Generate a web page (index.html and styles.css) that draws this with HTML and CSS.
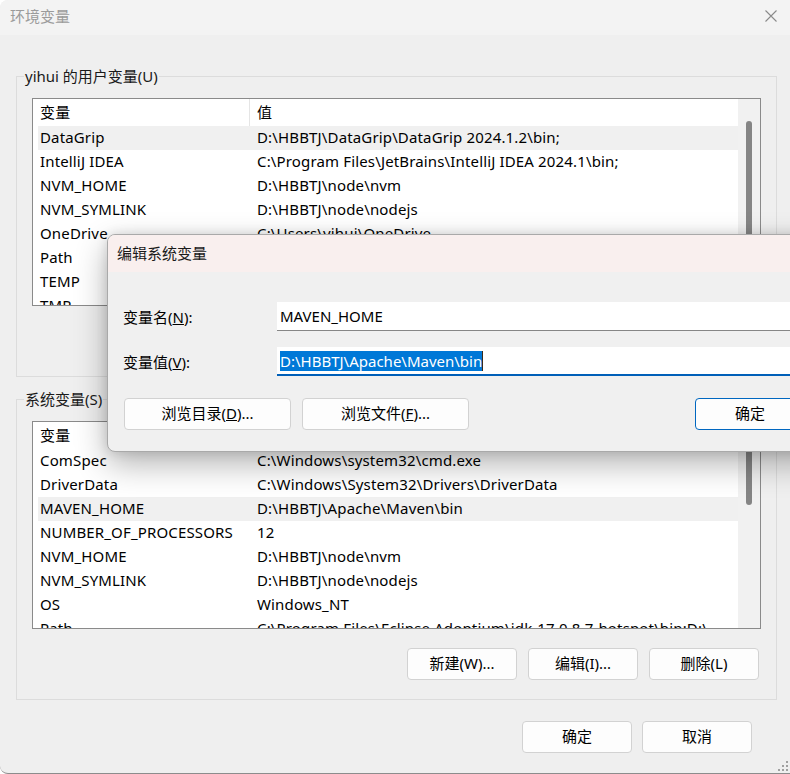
FILE: index.html
```html
<!DOCTYPE html>
<html lang="zh-CN">
<head>
  <meta charset="UTF-8">
  <title>环境变量</title>
  <link rel="stylesheet" href="styles.css">
</head>
<body>

<div class="window">
  <div class="titlebar">
    <span class="title">环境变量</span>
    <svg class="close" viewBox="0 0 12 12"><path d="M0.5 0.5L11.5 11.5M11.5 0.5L0.5 11.5" stroke="#8a8a8a" stroke-width="1.1" fill="none"/></svg>
  </div>

  <div class="content">
    <fieldset class="group">
      <legend>yihui 的用户变量(U)</legend>
      <div class="list">
        <div class="rows">
          <div class="row head"><span>变量</span><span>值</span></div>
          <div class="row sel"><span>DataGrip</span><span>D:\HBBTJ\DataGrip\DataGrip 2024.1.2\bin;</span></div>
          <div class="row"><span>IntelliJ IDEA</span><span>C:\Program Files\JetBrains\IntelliJ IDEA 2024.1\bin;</span></div>
          <div class="row"><span>NVM_HOME</span><span>D:\HBBTJ\node\nvm</span></div>
          <div class="row"><span>NVM_SYMLINK</span><span>D:\HBBTJ\node\nodejs</span></div>
          <div class="row"><span>OneDrive</span><span>C:\Users\yihui\OneDrive</span></div>
          <div class="row"><span>Path</span><span>C:\Users\yihui\AppData\Local\Microsoft\WindowsApps;</span></div>
          <div class="row"><span>TEMP</span><span>C:\Users\yihui\AppData\Local\Temp</span></div>
          <div class="row"><span>TMP</span><span>C:\Users\yihui\AppData\Local\Temp</span></div>
        </div>
        <div class="scrollbar"><div class="thumb user-thumb"></div></div>
      </div>
      <div class="actions">
        <button class="btn">新建(N)...</button>
        <button class="btn">编辑(E)...</button>
        <button class="btn">删除(D)</button>
      </div>
    </fieldset>

    <fieldset class="group">
      <legend>系统变量(S)</legend>
      <div class="list">
        <div class="rows">
          <div class="row head"><span>变量</span><span>值</span></div>
          <div class="row"><span>ComSpec</span><span>C:\Windows\system32\cmd.exe</span></div>
          <div class="row"><span>DriverData</span><span>C:\Windows\System32\Drivers\DriverData</span></div>
          <div class="row sel"><span>MAVEN_HOME</span><span>D:\HBBTJ\Apache\Maven\bin</span></div>
          <div class="row"><span>NUMBER_OF_PROCESSORS</span><span>12</span></div>
          <div class="row"><span>NVM_HOME</span><span>D:\HBBTJ\node\nvm</span></div>
          <div class="row"><span>NVM_SYMLINK</span><span>D:\HBBTJ\node\nodejs</span></div>
          <div class="row"><span>OS</span><span>Windows_NT</span></div>
          <div class="row"><span>Path</span><span>C:\Program Files\Eclipse Adoptium\jdk-17.0.8.7-hotspot\bin;D:\</span></div>
        </div>
        <div class="scrollbar"><div class="thumb sys-thumb"></div></div>
      </div>
      <div class="actions">
        <button class="btn">新建(W)...</button>
        <button class="btn">编辑(I)...</button>
        <button class="btn">删除(L)</button>
      </div>
    </fieldset>

    <div class="footer">
      <button class="btn">确定</button>
      <button class="btn">取消</button>
    </div>
  </div>

  <div class="dialog">
    <div class="dlg-title">编辑系统变量</div>
    <div class="dlg-body">
      <div class="form-row">
        <span>变量名(<u>N</u>):</span>
        <div class="field">MAVEN_HOME</div>
      </div>
      <div class="form-row">
        <span>变量值(<u>V</u>):</span>
        <div class="field active"><span class="selected">D:\HBBTJ\Apache\Maven\bin</span><span class="caret"></span></div>
      </div>
      <div class="dlg-actions">
        <button class="btn wide">浏览目录(<u>D</u>)...</button>
        <button class="btn wide">浏览文件(<u>F</u>)...</button>
        <button class="btn primary">确定</button>
      </div>
    </div>
  </div>

  <svg class="grip" viewBox="0 0 12 12">
    <rect x="9" y="1" width="2" height="2" fill="#a0a0a0"/>
    <rect x="5" y="5" width="2" height="2" fill="#a0a0a0"/>
    <rect x="9" y="5" width="2" height="2" fill="#a0a0a0"/>
    <rect x="1" y="9" width="2" height="2" fill="#a0a0a0"/>
    <rect x="5" y="9" width="2" height="2" fill="#a0a0a0"/>
    <rect x="9" y="9" width="2" height="2" fill="#a0a0a0"/>
  </svg>
</div>

</body>
</html>
```

FILE: styles.css
```css
body {
  margin: 0;
  background: #ffffff;
  font-family: "Noto Sans", "Noto Sans CJK SC", sans-serif;
  font-size: 15px;
  color: #000000;
}

.window {
  position: relative;
  width: 790px;
  height: 773px;
  background: #efefef;
  border-bottom: 1px solid #8c8c8c;
  border-radius: 8px 0 0 8px;
  overflow: hidden;
}

.titlebar {
  height: 35px;
  box-sizing: border-box;
  display: flex;
  align-items: center;
  justify-content: space-between;
  padding: 0 13px 3px 10px;
  background: #f3f3f3;
}

.title {
  color: #9b9b9b;
  line-height: 20px;
}

.close {
  width: 12px;
  height: 12px;
}

.content {
  padding: 0 13px 0 16px;
}

/* group boxes */
.group {
  margin: 31px 0 0;
  padding: 12px 15px 19px;
  border: 1px solid #dcdcdc;
  min-width: 0;
}

.group + .group {
  margin-top: 12px;
}

.group legend {
  margin-left: -8px;
  padding: 0 1px;
  line-height: 20px;
  color: #1a1a1a;
}

/* list views */
.list {
  display: flex;
  height: 208px;
  box-sizing: border-box;
  border: 1px solid #8a8a8a;
  background: #ffffff;
}

.rows {
  flex: 1;
  padding-left: 5px;
  overflow: hidden;
}

.row {
  display: grid;
  grid-template-columns: 212px 1fr;
  height: 24px;
  line-height: 22px;
  white-space: nowrap;
  letter-spacing: 0.15px;
}

.row span {
  overflow: hidden;
  padding-left: 2px;
}

.row span + span {
  padding-left: 7px;
}

.row.head {
  height: 27px;
  line-height: 27px;
}

.row.head span:first-child {
  border-right: 1px solid #e5e5e5;
}

.row.sel {
  background: #f0f0f0;
}

.scrollbar {
  width: 22px;
  background: #f1f1f1;
}

.thumb {
  width: 6px;
  margin-left: 8px;
  background: #858585;
  border-radius: 3px;
}

.user-thumb {
  margin-top: 22px;
  height: 140px;
}

.sys-thumb {
  margin-top: 21px;
  height: 62px;
}

/* buttons */
.btn {
  width: 110px;
  height: 32px;
  box-sizing: border-box;
  padding: 0 0 2px;
  border: 1px solid #d2d2d2;
  border-radius: 4px;
  background: #fdfdfd;
  font: inherit;
  color: #000000;
  line-height: 20px;
}

.actions {
  display: flex;
  justify-content: flex-end;
  gap: 11px;
  margin-top: 19px;
  padding-right: 2px;
}

.footer {
  display: flex;
  justify-content: flex-end;
  gap: 10px;
  margin-top: 21px;
  padding-right: 25px;
}

/* edit dialog */
.dialog {
  position: absolute;
  left: 107px;
  top: 234px;
  width: 720px;
  background: #f0f0f0;
  border: 1px solid #a9a9a9;
  border-radius: 8px;
  box-shadow: 0 12px 32px rgba(0, 0, 0, 0.3), 0 0 12px rgba(0, 0, 0, 0.12);
  overflow: hidden;
}

.dlg-title {
  height: 37px;
  box-sizing: border-box;
  display: flex;
  align-items: center;
  padding: 0 0 3px 9px;
  background: #f9efee;
  color: #1a1a1a;
}

.dlg-body {
  padding: 30px 23px 21px 15px;
}

.form-row {
  display: grid;
  grid-template-columns: 154px 1fr;
  align-items: center;
}

.form-row + .form-row {
  margin-top: 16px;
}

.field {
  height: 28px;
  display: flex;
  align-items: center;
  padding-left: 3px;
  background: #ffffff;
  border-bottom: 1px solid #868686;
  white-space: nowrap;
}

.field.active {
  height: 27px;
  border-bottom: 2px solid #005fb8;
}

.selected {
  line-height: 20px;
  background: #0078d7;
  color: #ffffff;
}

.caret {
  width: 1px;
  height: 20px;
  background: #3a2a1a;
}

.dlg-actions {
  display: flex;
  gap: 11px;
  margin-top: 22px;
  padding-left: 1px;
}

.btn.wide {
  width: 167px;
}

.btn.primary {
  margin-left: auto;
  border-color: #0067c0;
}

.grip {
  position: absolute;
  right: 1px;
  bottom: 1px;
  width: 12px;
  height: 12px;
}
```
